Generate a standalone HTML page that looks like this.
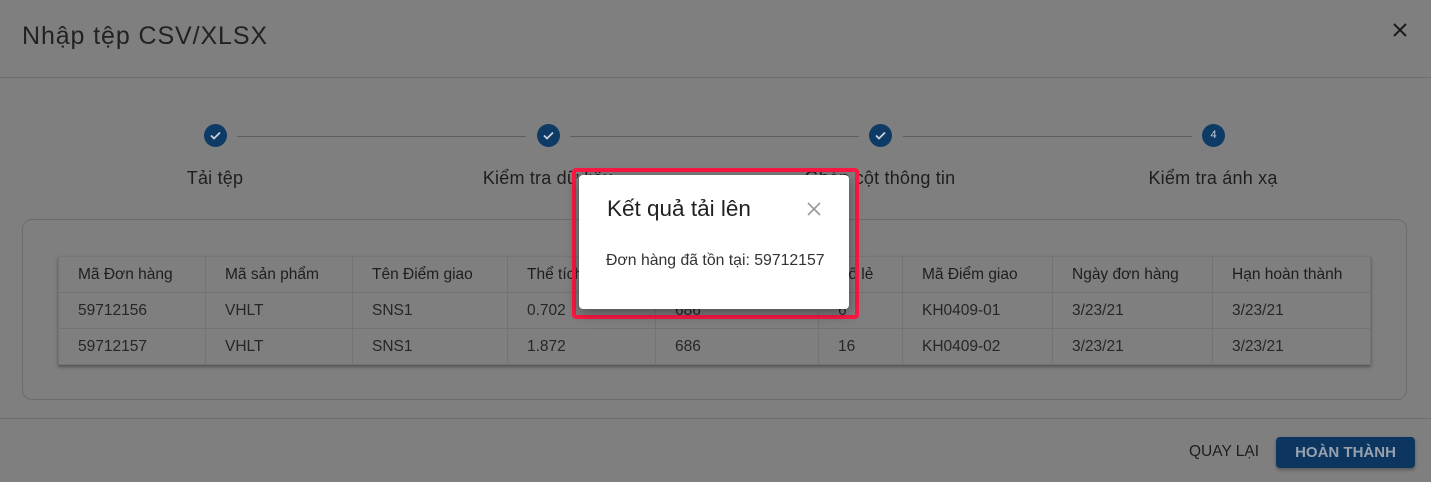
<!DOCTYPE html>
<html><head><meta charset="utf-8"><style>
*{box-sizing:border-box;margin:0;padding:0}
body{width:1431px;height:482px;overflow:hidden;background:#7f7f7f;font-family:"Liberation Sans",sans-serif;color:#1c1c1c;position:relative}
.a{position:absolute}
.title{left:22px;top:22px;font-size:25px;color:#222;letter-spacing:0.9px}
.hr{left:0;width:1431px;height:1px;background:#6e6e6e}
.circ{width:23px;height:23px;border-radius:50%;background:#0e3a66;top:124px}
.line{height:1px;background:#5e5e5e;top:136px}
.lbl{top:168px;font-size:18px;width:240px;text-align:center;color:#1e1e1e;letter-spacing:0.2px}
.card{left:22px;top:219px;width:1385px;height:181px;border:1px solid #6c6c6c;border-radius:10px}
table{position:absolute;left:58px;top:256px;border-collapse:collapse;font-size:15.5px;color:#262626;box-shadow:0 2px 3px rgba(0,0,0,.35)}
td{height:36px;border:1px solid #737373;padding-left:19px;white-space:nowrap}
tr:first-child td{border-top:1px solid #767676;color:#1e1e1e}
.red{left:572px;top:168px;width:287px;height:151px;border:4px solid #ff1744;border-radius:4px}
.dlg{left:579px;top:175px;width:270px;height:134px;background:#fff;border-radius:4px;box-shadow:0 4px 14px rgba(0,0,0,.4)}
.btn{left:1276px;top:437px;width:139px;height:31px;background:#0c3560;border-radius:4px;color:#97a2ae;font-weight:bold;font-size:15px;text-align:center;line-height:31px;box-shadow:0 2px 3px rgba(0,0,0,.3)}
</style></head><body>
<div class="a title">Nhập tệp CSV/XLSX</div>
<svg class="a" style="left:1392px;top:22px" width="16" height="16"><path d="M2 2L14 14M14 2L2 14" stroke="#1a1a1a" stroke-width="2"/></svg>
<div class="a hr" style="top:77px"></div>

<div class="a line" style="left:237px;width:289px"></div>
<div class="a line" style="left:570px;width:289px"></div>
<div class="a line" style="left:903px;width:289px"></div>
<div class="a circ" style="left:204px"><svg width="23" height="23"><path d="M7 11.5l3 3 6-6" stroke="#c8d0da" stroke-width="1.8" fill="none"/></svg></div>
<div class="a circ" style="left:537px"><svg width="23" height="23"><path d="M7 11.5l3 3 6-6" stroke="#c8d0da" stroke-width="1.8" fill="none"/></svg></div>
<div class="a circ" style="left:869px"><svg width="23" height="23"><path d="M7 11.5l3 3 6-6" stroke="#c8d0da" stroke-width="1.8" fill="none"/></svg></div>
<div class="a circ" style="left:1202px;color:#c8d0da;font-size:11px;text-align:center;line-height:23px">4</div>
<div class="a lbl" style="left:95px">Tải tệp</div>
<div class="a lbl" style="left:428px">Kiểm tra dữ liệu</div>
<div class="a lbl" style="left:760px">Ghép cột thông tin</div>
<div class="a lbl" style="left:1093px">Kiểm tra ánh xạ</div>

<div class="a card"></div>
<table>
<tr><td style="width:147px">Mã Đơn hàng</td><td style="width:147px">Mã sản phẩm</td><td style="width:155px">Tên Điểm giao</td><td style="width:148px">Thể tích</td><td style="width:163px">Số lượng</td><td style="width:84px">Số lẻ</td><td style="width:150px">Mã Điểm giao</td><td style="width:160px">Ngày đơn hàng</td><td style="width:158px">Hạn hoàn thành</td></tr>
<tr><td>59712156</td><td>VHLT</td><td>SNS1</td><td>0.702</td><td>686</td><td>6</td><td>KH0409-01</td><td>3/23/21</td><td>3/23/21</td></tr>
<tr><td>59712157</td><td>VHLT</td><td>SNS1</td><td>1.872</td><td>686</td><td>16</td><td>KH0409-02</td><td>3/23/21</td><td>3/23/21</td></tr>
</table>

<div class="a hr" style="top:418px"></div>
<div class="a" style="left:1189px;top:443px;font-size:15.5px;color:#1e1e1e">QUAY LẠI</div>
<div class="a btn">HOÀN THÀNH</div>

<div class="a red"></div>
<div class="a dlg">
<div class="a" style="left:28px;top:21px;font-size:22.5px;color:#222">Kết quả tải lên</div>
<svg class="a" style="left:228px;top:27px" width="14" height="14"><path d="M1 1L13 13M13 1L1 13" stroke="#999" stroke-width="1.6"/></svg>
<div class="a" style="left:27px;top:77px;font-size:15.8px;color:#333">Đơn hàng đã tồn tại: 59712157</div>
</div>
</body></html>
